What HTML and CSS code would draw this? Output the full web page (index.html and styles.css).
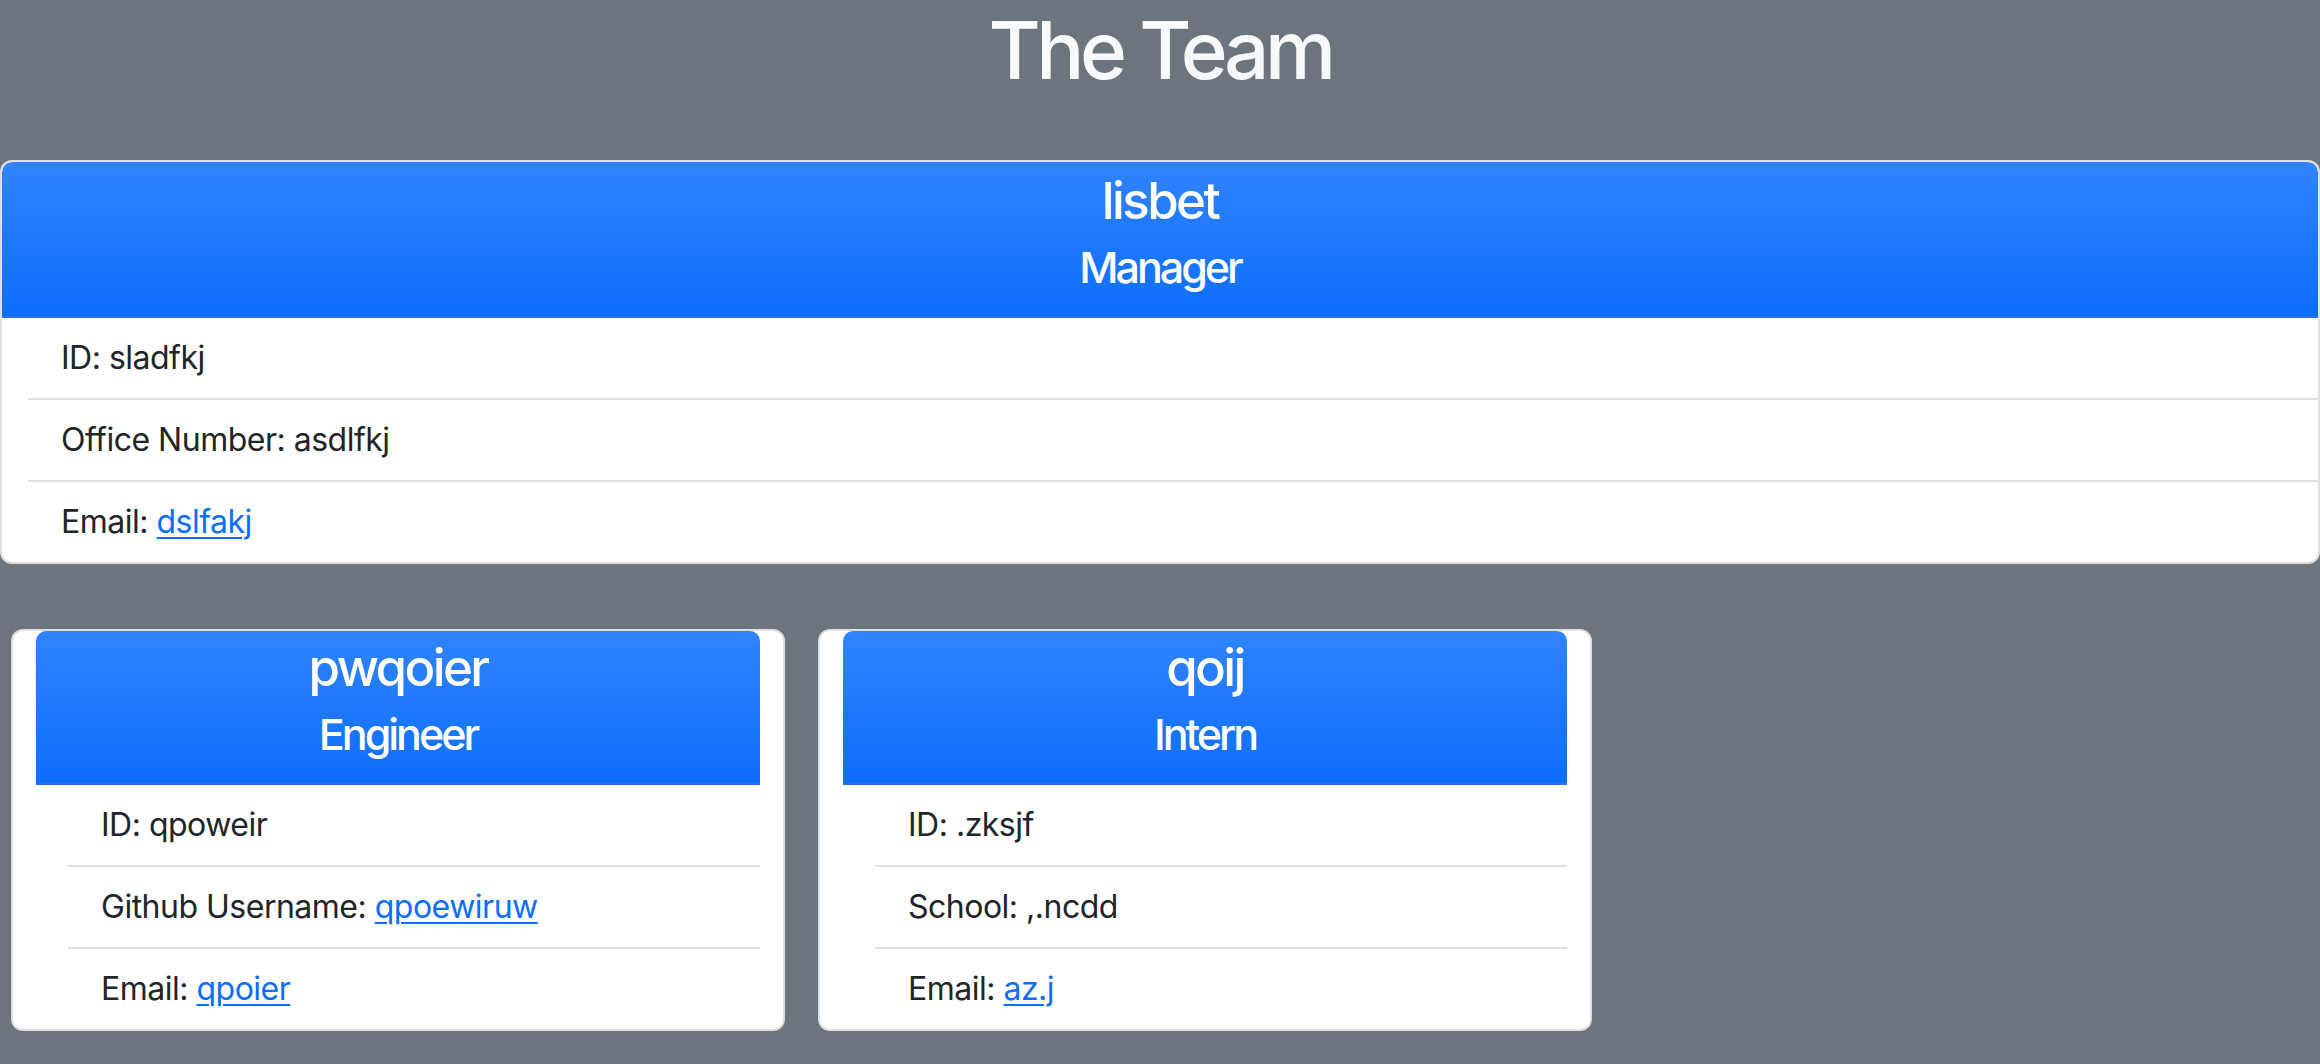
FILE: index.html
```html
<!DOCTYPE html>
<html lang="en">
<head>
<meta charset="utf-8">
<title>The Team</title>
<link rel="stylesheet" href="styles.css">
</head>
<body>
<h1 class="page-title">The Team</h1>
<main class="team">
  <section class="card card-manager">
    <div class="card-header">
      <h3 class="name">lisbet</h3>
      <h4 class="role">Manager</h4>
    </div>
    <ul class="list-group">
      <li class="list-item">ID: sladfkj</li>
      <li class="list-item">Office Number: asdlfkj</li>
      <li class="list-item">Email: <a href="#" class="link">dslfakj</a></li>
    </ul>
  </section>
  <div class="card-row">
    <section class="card card-member">
      <div class="card-header">
        <h3 class="name">pwqoier</h3>
        <h4 class="role">Engineer</h4>
      </div>
      <ul class="list-group">
        <li class="list-item">ID: qpoweir</li>
        <li class="list-item">Github Username: <a href="#" class="link">qpoewiruw</a></li>
        <li class="list-item">Email: <a href="#" class="link">qpoier</a></li>
      </ul>
    </section>
    <section class="card card-member">
      <div class="card-header">
        <h3 class="name">qoij</h3>
        <h4 class="role">Intern</h4>
      </div>
      <ul class="list-group">
        <li class="list-item">ID: .zksjf</li>
        <li class="list-item">School: ,.ncdd</li>
        <li class="list-item">Email: <a href="#" class="link">az.j</a></li>
      </ul>
    </section>
  </div>
</main>
</body>
</html>
```
FILE: styles.css
```css
html, body {
  margin: 0;
  padding: 0;
}
body {
  background: #6c757d;
  font-family: Inter, "Liberation Sans", sans-serif;
  font-size: 32px;
  line-height: 1.5;
  color: #212529;
  min-height: 1064px;
}
.page-title {
  margin: 0 0 62px;
  padding-top: 2px;
  text-align: center;
  font-size: 80px;
  font-weight: 500;
  line-height: 1.2;
  letter-spacing: -4.5px;
  color: #f8f9fa;
}
.card {
  box-sizing: border-box;
  background: #fff;
  border: 2px solid rgba(0, 0, 0, 0.125);
  border-radius: 12px;
  overflow: hidden;
}
.card-header {
  background: #0d6efd linear-gradient(180deg, rgba(255, 255, 255, 0.15), rgba(255, 255, 255, 0));
  color: #fff;
  text-align: center;
  border-bottom: 2px solid rgba(0, 0, 0, 0.125);
  border-radius: 10px 10px 0 0;
  padding: 8px 32px 22px;
}
.name {
  margin: 0 0 11px;
  font-size: 51px;
  font-weight: 500;
  line-height: 1.2;
  letter-spacing: -2.6px;
}
.role {
  margin: 0;
  font-size: 43px;
  font-weight: 500;
  line-height: 1.2;
  letter-spacing: -3px;
}
.list-group {
  list-style: none;
  margin: 0;
  padding: 0;
}
.list-item {
  padding: 16px 33px;
  letter-spacing: -0.5px;
  border-bottom: 2px solid rgba(0, 0, 0, 0.125);
}
.list-item:last-child {
  border-bottom: 0;
}
.link {
  color: #0d6efd;
  text-decoration: underline;
  text-underline-offset: 4px;
  text-decoration-thickness: 2px;
}
.card-manager {
  width: 100%;
}
.card-manager .list-group {
  margin-left: 26px;
}
.card-row {
  display: flex;
  gap: 33px;
  margin-top: 65px;
  padding-left: 11px;
}
.card-member {
  width: 774px;
  overflow: visible;
}
.card-member .card-header {
  margin: 0 23px;
  padding-top: 6px;
}
.card-member .list-group {
  margin: 0 23px 0 55px;
}
```
